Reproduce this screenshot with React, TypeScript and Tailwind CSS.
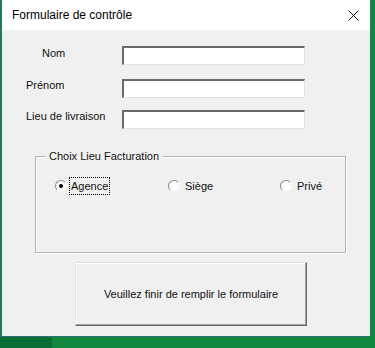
function Field() {
  return (
    <div className="h-[19px] w-[183px] border-t-2 border-l-2 border-b border-r border-t-[#6a6a6a] border-l-[#6a6a6a] border-b-[#e3e3e3] border-r-[#e3e3e3] bg-white" />
  );
}

function Radio({ label, checked, focused }: { label: string; checked?: boolean; focused?: boolean }) {
  return (
    <div className="flex items-center h-[18px]">
      <span className="w-[12px] h-[12px] rounded-full border border-t-[#8a8a8a] border-l-[#8a8a8a] border-b-[#f4f4f4] border-r-[#f4f4f4] bg-white flex items-center justify-center shrink-0">
        {checked && <span className="w-[4px] h-[4px] rounded-full bg-black" />}
      </span>
      <span
        className={
          focused
            ? "ml-[2px] px-[1px] leading-[16px] border border-dotted border-black text-[11px] text-[#111]"
            : "ml-[5px] leading-[16px] text-[11px] text-[#111]"
        }
      >
        {label}
      </span>
    </div>
  );
}

export default function App() {
  return (
    <div
      className="w-[375px] h-[348px] bg-[#10893e] flex flex-col overflow-hidden"
      style={{ fontFamily: '"Liberation Sans", Arial, sans-serif' }}
    >
      <div className="ml-[1px] w-[370px] h-[337px] border-l border-r border-b border-[#2c6f73] flex flex-col shrink-0">
        <div className="h-[30px] bg-white flex items-center justify-between pl-[10px] pr-[12px]">
          <span className="text-[12px] text-black">Formulaire de contrôle</span>
          <svg width="11" height="11" viewBox="0 0 11 11" className="mr-[-1px]">
            <path d="M0.5 0.5 L10.5 10.5 M10.5 0.5 L0.5 10.5" stroke="#111" strokeWidth="1" fill="none" />
          </svg>
        </div>

        <div className="flex-1 bg-[#f0f0f0] flex flex-col">
          <div className="flex items-start mt-[16px]">
            <span className="w-[120px] pl-[40px] text-[11px] text-[#111] leading-[14px]">Nom</span>
            <Field />
          </div>
          <div className="flex items-start mt-[14px]">
            <span className="w-[120px] pl-[24px] text-[11px] text-[#111] leading-[14px] mt-[-1px]">Prénom</span>
            <Field />
          </div>
          <div className="flex items-start mt-[12px]">
            <span className="w-[120px] pl-[24px] text-[11px] text-[#111] leading-[14px] mt-[-1px]">Lieu de livraison</span>
            <Field />
          </div>

          <fieldset className="ml-[33px] mt-[20px] w-[311px] h-[104px] border border-[#b4b4b4] shadow-[inset_1px_1px_0_#ffffff,1px_1px_0_#ffffff]">
            <legend className="ml-[10px] px-[3px] text-[11px] leading-[14px] text-[#111]">Choix Lieu Facturation</legend>
            <div className="grid grid-cols-[113px_112px_1fr] pl-[19px] mt-[14px]">
              <Radio label="Agence" checked focused />
              <Radio label="Siège" />
              <Radio label="Privé" />
            </div>
          </fieldset>

          <button className="ml-[73px] mt-[9px] w-[232px] h-[64px] bg-[#f0f0f0] border border-t-[#e3e3e3] border-l-[#e3e3e3] border-b-[#696969] border-r-[#696969] shadow-[inset_-1px_-1px_0_#a0a0a0,inset_1px_1px_0_#ffffff] text-[11px] text-[#111] flex items-center justify-center">
            Veuillez finir de remplir le formulaire
          </button>
        </div>
      </div>
      <div className="flex-1 flex">
        <div className="w-[52px] bg-[#0b6e36]" />
      </div>
    </div>
  );
}
